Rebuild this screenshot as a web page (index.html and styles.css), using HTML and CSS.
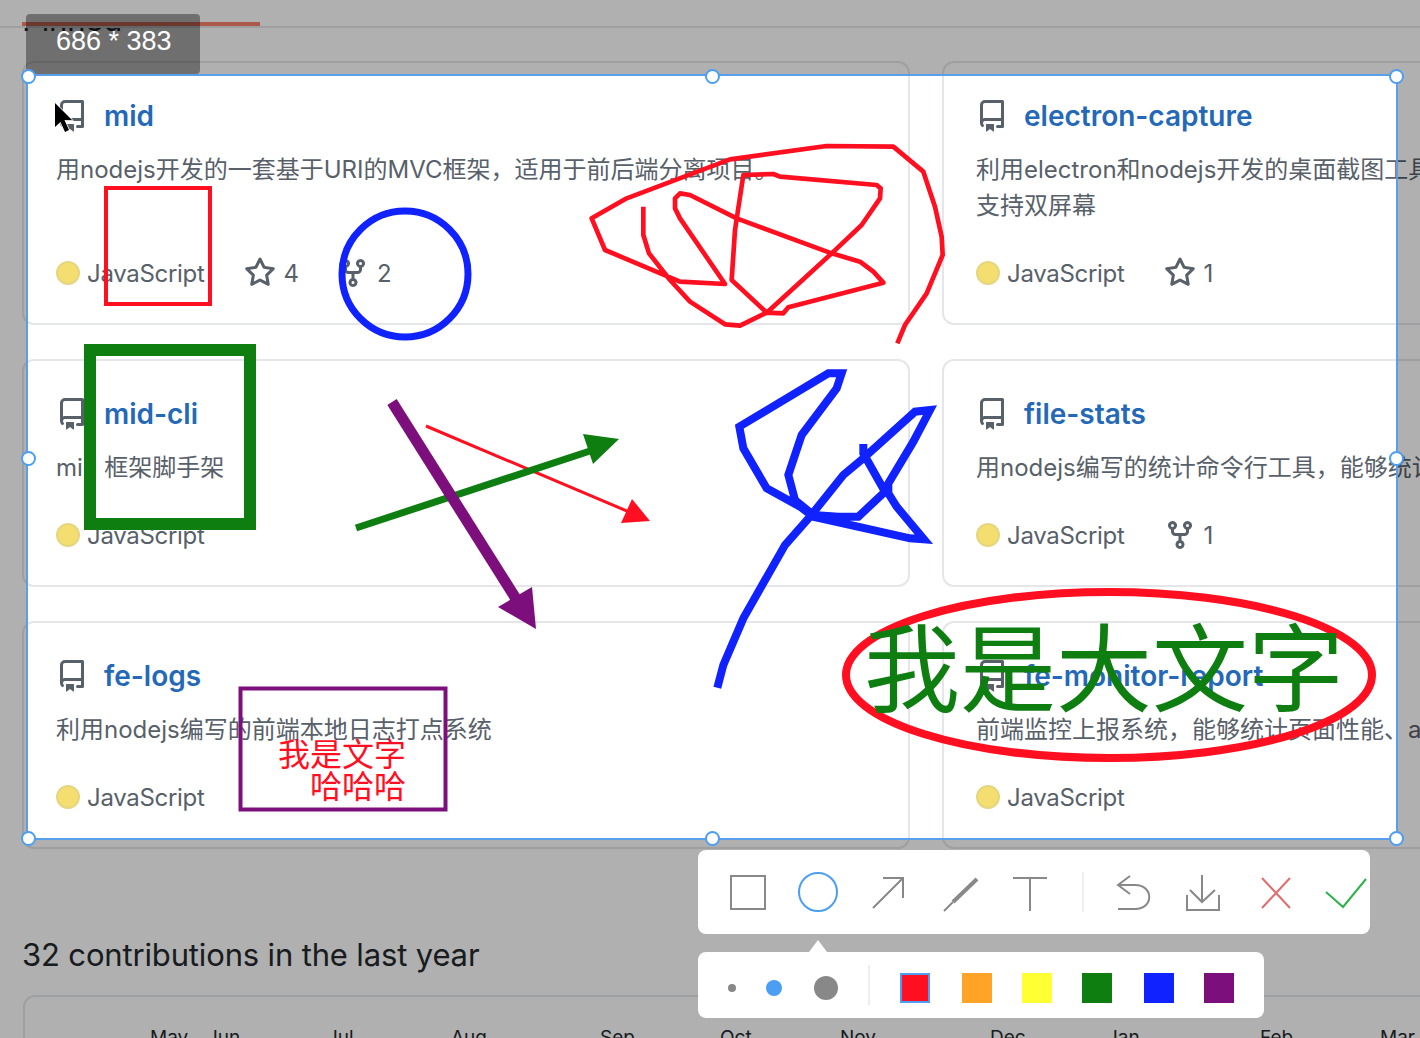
FILE: index.html
```html
<!DOCTYPE html>
<html lang="zh">
<head>
<meta charset="utf-8">
<title>Screenshot capture</title>
<link rel="stylesheet" href="styles.css">
</head>
<body>
<svg class="defs" width="0" height="0" aria-hidden="true">
  <symbol id="i-repo" viewBox="0 0 16 16"><path fill-rule="evenodd" d="M2 2.5A2.5 2.5 0 014.5 0h8.75a.75.75 0 01.75.75v12.5a.75.75 0 01-.75.75h-2.5a.75.75 0 110-1.5h1.75v-2h-8a1 1 0 00-.714 1.7.75.75 0 01-1.072 1.05A2.496 2.496 0 012 11.5v-9zm10.5-1V9h-8c-.356 0-.694.074-1 .208V2.5a1 1 0 011-1h8zM5 12.25v3.25a.25.25 0 00.4.2l1.45-1.087a.25.25 0 01.3 0L8.6 15.7a.25.25 0 00.4-.2v-3.25a.25.25 0 00-.25-.25h-3.5a.25.25 0 00-.25.25z"/></symbol>
  <symbol id="i-star" viewBox="0 0 16 16"><path fill-rule="evenodd" d="M8 .25a.75.75 0 01.673.418l1.882 3.815 4.21.612a.75.75 0 01.416 1.279l-3.046 2.97.719 4.192a.75.75 0 01-1.088.791L8 12.347l-3.766 1.98a.75.75 0 01-1.088-.79l.72-4.194L.818 6.374a.75.75 0 01.416-1.28l4.21-.611L7.327.668A.75.75 0 018 .25zm0 2.445L6.615 5.5a.75.75 0 01-.564.41l-3.097.45 2.24 2.184a.75.75 0 01.216.664l-.528 3.084 2.769-1.456a.75.75 0 01.698 0l2.77 1.456-.53-3.084a.75.75 0 01.216-.664l2.24-2.183-3.096-.45a.75.75 0 01-.564-.41L8 2.694v.001z"/></symbol>
  <symbol id="i-fork" viewBox="0 0 16 16"><path fill-rule="evenodd" d="M5 3.25a.75.75 0 11-1.5 0 .75.75 0 011.5 0zm0 2.122a2.25 2.25 0 10-1.5 0v.878A2.25 2.25 0 005.75 8.5h1.5v2.128a2.251 2.251 0 101.5 0V8.5h1.5a2.25 2.25 0 002.25-2.25v-.878a2.25 2.25 0 10-1.5 0v.878a.75.75 0 01-.75.75h-4.5A.75.75 0 015 6.25v-.878zm3.75 7.378a.75.75 0 11-1.5 0 .75.75 0 011.5 0zm3-8.75a.75.75 0 100-1.5.75.75 0 000 1.5z"/></symbol>
</svg>

<div class="page">
  <nav class="tabs"><span class="tab-active"></span></nav>
  <h2 class="pinned-title">Pinned</h2>

  <section class="repo-grid">
    <article class="card">
      <header class="card-head"><svg class="icon"><use href="#i-repo"/></svg><a class="repo-name">mid</a></header>
      <p class="desc">用nodejs开发的一套基于URI的MVC框架，适用于前后端分离项目。</p>
      <footer class="meta"><span class="dot"></span><span class="lang">JavaScript</span><span class="stat"><svg class="icon"><use href="#i-star"/></svg>4</span><span class="stat"><svg class="icon"><use href="#i-fork"/></svg>2</span></footer>
    </article>
    <article class="card">
      <header class="card-head"><svg class="icon"><use href="#i-repo"/></svg><a class="repo-name">electron-capture</a></header>
      <p class="desc">利用electron和nodejs开发的桌面截图工具，<br>支持双屏幕</p>
      <footer class="meta"><span class="dot"></span><span class="lang">JavaScript</span><span class="stat"><svg class="icon"><use href="#i-star"/></svg>1</span></footer>
    </article>
    <article class="card">
      <header class="card-head"><svg class="icon"><use href="#i-repo"/></svg><a class="repo-name">mid-cli</a></header>
      <p class="desc">mid 框架脚手架</p>
      <footer class="meta"><span class="dot"></span><span class="lang">JavaScript</span></footer>
    </article>
    <article class="card">
      <header class="card-head"><svg class="icon"><use href="#i-repo"/></svg><a class="repo-name">file-stats</a></header>
      <p class="desc">用nodejs编写的统计命令行工具，能够统计文件的代码行数</p>
      <footer class="meta"><span class="dot"></span><span class="lang">JavaScript</span><span class="stat"><svg class="icon"><use href="#i-fork"/></svg>1</span></footer>
    </article>
    <article class="card">
      <header class="card-head"><svg class="icon"><use href="#i-repo"/></svg><a class="repo-name">fe-logs</a></header>
      <p class="desc">利用nodejs编写的前端本地日志打点系统</p>
      <footer class="meta"><span class="dot"></span><span class="lang">JavaScript</span></footer>
    </article>
    <article class="card">
      <header class="card-head"><svg class="icon"><use href="#i-repo"/></svg><a class="repo-name">fe-monitor-report</a></header>
      <p class="desc">前端监控上报系统，能够统计页面性能、ajax请求和错误</p>
      <footer class="meta"><span class="dot"></span><span class="lang">JavaScript</span></footer>
    </article>
  </section>

  <h2 class="contrib-title">32 contributions in the last year</h2>
  <section class="calendar">
    <div class="months">
      <span style="width:57px">May</span><span style="width:120px">Jun</span><span style="width:124px">Jul</span><span style="width:149px">Aug</span><span style="width:120px">Sep</span><span style="width:120px">Oct</span><span style="width:150px">Nov</span><span style="width:117px">Dec</span><span style="width:153px">Jan</span><span style="width:120px">Feb</span><span>Mar</span>
    </div>
  </section>
</div>

<!-- Capture layer -->
<div class="selection">
  <span class="handle h-tl"></span><span class="handle h-tc"></span><span class="handle h-tr"></span>
  <span class="handle h-ml"></span><span class="handle h-mr"></span>
  <span class="handle h-bl"></span><span class="handle h-bc"></span><span class="handle h-br"></span>
</div>
<div class="size-label">686 * 383</div>

<svg class="drawing" viewBox="0 0 1420 1038">
  <rect class="s-red" x="106" y="188" width="104" height="116" stroke-width="4"/>
  <circle class="s-blue" cx="405" cy="274" r="63" stroke-width="7"/>
  <rect class="s-green" x="90" y="350" width="160" height="174" stroke-width="12"/>
  <rect class="s-purple" x="240.500" y="688.500" width="205" height="121" stroke-width="4"/>
  <ellipse class="s-red" cx="1109" cy="675" rx="263" ry="83" stroke-width="8"/>

  <g transform="translate(580 130) scale(.33333)">
    <path class="s-red s-round" stroke-width="14" d="M190 230L190 315 207 370 270 450 330 515 435 583 480 587 560 548 610 550 625 532 910 458 880 425 840 395 755 370 470 265 330 195 300 190 285 205 285 235 300 265 435 462 300 455 75 360 35 265 140 205 450 88 740 48 940 50 1030 125 1065 230 1085 320 1088 375 1040 490 975 585 952 640"/>
    <path class="s-red s-round" stroke-width="14" d="M560 548L455 450 465 300 490 135 580 132 600 140 890 165 902 175 900 205 845 285 755 370 560 548"/>
  </g>

  <g transform="translate(700 360) scale(.33333)">
    <path class="s-blue s-miter" stroke-width="24" d="M52 983L70 915 130 775 255 555 330 470 430 345 490 295 645 155 690 150 640 245 565 370 565 400 590 440 672 538 630 535 340 470 300 440 200 385 130 265 118 200 385 40 425 40 410 85 305 225 265 345 285 420 340 465 415 470 475 470 555 395 490 280 490 252"/>
  </g>

  <line class="s-red" x1="426" y1="426" x2="634" y2="514" stroke-width="3"/>
  <polygon class="f-red" points="650,521 632,499 621,523"/>
  <line class="s-green" x1="356" y1="528" x2="596" y2="449" stroke-width="7"/>
  <polygon class="f-green" points="619,439 583,434 593,464"/>
  <line class="s-purple" x1="392" y1="402" x2="518" y2="602" stroke-width="11"/>
  <polygon class="f-purple" points="536,629 532,587 498,607"/>

  <text class="big-text" x="864" y="704">我是大文字</text>
  <text class="note-text" x="278" y="766">我是文字</text>
  <text class="note-text" x="310" y="798">哈哈哈</text>

  <polygon class="cursor" points="55,103 55,127 60.500,122 65,132 69,130 64.500,120 72,120"/>
</svg>

<div class="toolbar">
  <svg class="tool" viewBox="0 0 36 36"><rect x="1" y="2" width="34" height="33"/></svg>
  <svg class="tool" viewBox="0 0 36 36"><circle class="tool-active" cx="18" cy="18" r="19"/></svg>
  <svg class="tool" viewBox="0 0 36 36"><path d="M3 34L33 4M13 4H33V24"/></svg>
  <svg class="tool" viewBox="0 0 36 36"><path d="M4 37L13 28"/><path class="tool-thick" d="M13 28L37 5"/></svg>
  <svg class="tool" viewBox="0 0 36 36"><path d="M3 4H37M20 4V37"/></svg>
  <span class="divider"></span>
  <svg class="tool" viewBox="0 0 36 36"><path d="M12 2L0 11 12 20M0 11H17C36 11 36 35 17 35H0" /></svg>
  <svg class="tool" viewBox="0 0 36 36"><path d="M14 1V28M2 16L14 28 27 16M-1 21V36H31V21"/></svg>
  <svg class="tool tool-cancel" viewBox="0 0 36 36"><path d="M4 4L32 34M32 4L4 34"/></svg>
  <svg class="tool tool-ok" viewBox="0 0 36 36"><path d="M-2 18L15 33 38 5"/></svg>
</div>

<span class="caret"></span>

<div class="palette">
  <span class="size size-s"></span>
  <span class="size size-m"></span>
  <span class="size size-l"></span>
  <span class="divider"></span>
  <span class="swatch swatch-red"></span>
  <span class="swatch swatch-orange"></span>
  <span class="swatch swatch-yellow"></span>
  <span class="swatch swatch-green"></span>
  <span class="swatch swatch-blue"></span>
  <span class="swatch swatch-purple"></span>
</div>
</body>
</html>
```
FILE: styles.css
```css
* { box-sizing: border-box; }
html, body {
  margin: 0;
  height: 1038px;
  overflow: hidden;
  background: #fff;
}
body {
  position: relative;
  font-family: Inter, "Noto Sans CJK SC", sans-serif;
  color: #24292e;
}
.defs { position: absolute; }

/* Page underneath */
.page { width: 1420px; height: 1038px; overflow: hidden; }
.tabs {
  position: relative;
  height: 28px;
  margin-bottom: -32px;
  background: #fff;
  border-bottom: 2px solid #e4e6e9;
}
.tab-active {
  position: absolute;
  left: 22px;
  bottom: 0;
  width: 238px;
  height: 4px;
  background: #f9826c;
}
.pinned-title {
  margin: 0 0 17px 22px;
  font-size: 31px;
  letter-spacing: -.15px;
  line-height: 48px;
  font-weight: 400;
}
.repo-grid {
  display: grid;
  grid-template-columns: 888px 888px;
  column-gap: 32px;
  row-gap: 34px;
  margin-left: 22px;
}
.card {
  display: flex;
  flex-direction: column;
  padding: 32px;
  border: 2px solid #e4e6e9;
  border-radius: 12px;
  background: #fff;
}
.card-head { display: flex; align-items: center; gap: 16px; height: 42px; }
.icon { width: 32px; height: 32px; fill: #586069; flex: none; }
.repo-name {
  font-size: 28px;
  font-weight: 600;
  line-height: 42px;
  color: #2468b8;
}
.desc {
  margin: 15px 0 31px;
  font-size: 24px;
  line-height: 36px;
  color: #586069;
  white-space: nowrap;
}
.meta {
  display: flex;
  align-items: center;
  height: 36px;
  margin-top: auto;
  font-size: 24px;
  color: #586069;
}
.dot {
  width: 24px;
  height: 24px;
  border-radius: 50%;
  background: #f4de70;
  border: 2px solid #e5d680;
  margin-right: 7px;
}
.lang { margin-right: 39px; letter-spacing: -.3px; }
.stat { display: flex; align-items: center; gap: 8px; margin-right: 38px; }

.contrib-title {
  margin: 82px 0 16px 22px;
  font-size: 31px;
  letter-spacing: -.15px;
  line-height: 48px;
  font-weight: 400;
}
.calendar {
  margin-left: 23px;
  width: 1500px;
  height: 200px;
  border: 2px solid #e4e6e9;
  border-radius: 12px;
  padding: 26px 0 0 125px;
}
.months { display: flex; font-size: 19px; line-height: 30px; }

/* Capture layer */
.selection {
  position: absolute;
  left: 26px;
  top: 74px;
  width: 1372px;
  height: 766px;
  border: 2px solid #5a9fec;
  box-shadow: 0 0 0 2000px rgba(0, 0, 0, .31);
}
.handle {
  position: absolute;
  width: 15px;
  height: 15px;
  margin: -7.500px 0 0 -7.500px;
  border: 2px solid #4c9ef2;
  border-radius: 50%;
  background: #fff;
  z-index: 3;
}
.h-tl { left: 0; top: 0; }
.h-tc { left: 684px; top: 0; }
.h-tr { left: 1368px; top: 0; }
.h-ml { left: 0; top: 382px; }
.h-mr { left: 1368px; top: 382px; }
.h-bl { left: 0; top: 762px; }
.h-bc { left: 684px; top: 762px; }
.h-br { left: 1368px; top: 762px; }

.size-label {
  position: absolute;
  left: 26px;
  top: 14px;
  width: 174px;
  height: 60px;
  padding-left: 30px;
  border-radius: 4px;
  background: rgba(0, 0, 0, .37);
  color: #fff;
  font-family: "Liberation Sans", sans-serif;
  font-size: 27px;
  line-height: 54px;
}

.drawing {
  position: absolute;
  left: 0;
  top: 0;
  width: 1420px;
  height: 1038px;
  pointer-events: none;
}
.drawing rect, .drawing circle, .drawing ellipse, .drawing line, .drawing path { fill: none; }
.s-red { stroke: #ff0f1f; }
.s-blue { stroke: #0f22ff; }
.s-green { stroke: #0e7e11; }
.s-purple { stroke: #7d0f7d; }
.s-round { stroke-linejoin: round; stroke-linecap: butt; }
.s-miter { stroke-linejoin: miter; stroke-miterlimit: 10; stroke-linecap: butt; }
.f-red { fill: #ff0f1f; }
.f-green { fill: #0e7e11; }
.f-purple { fill: #7d0f7d; }
.big-text { fill: #0e7e11; font-size: 96px; font-family: "Noto Sans CJK SC", sans-serif; }
.note-text { fill: #ff0f1f; font-size: 32px; font-family: "Noto Sans CJK SC", sans-serif; }
.cursor { fill: #000; stroke: #fff; stroke-width: 1.500; paint-order: stroke; }

.toolbar {
  position: absolute;
  left: 698px;
  top: 850px;
  width: 672px;
  height: 84px;
  padding-left: 32px;
  display: flex;
  align-items: center;
  gap: 34px;
  background: #fff;
  border-radius: 8px;
}
.tool {
  width: 36px;
  height: 36px;
  flex: none;
  overflow: visible;
  fill: none;
  stroke: #888;
  stroke-width: 2;
}
.tool-active { stroke: #4c9ef2; }
.tool-thick { stroke-width: 4; }
.tool-cancel { stroke: #e06c6c; }
.tool-ok { stroke: #2cb34a; }
.divider {
  width: 2px;
  height: 40px;
  flex: none;
  background: #eee;
}
.toolbar .divider { margin-left: 2px; }

.caret {
  position: absolute;
  left: 809px;
  top: 940px;
  border-left: 9px solid transparent;
  border-right: 9px solid transparent;
  border-bottom: 12px solid #fff;
}

.palette {
  position: absolute;
  left: 698px;
  top: 952px;
  width: 566px;
  height: 66px;
  padding: 5px 0 0 30px;
  display: flex;
  align-items: center;
  gap: 30px;
  background: #fff;
  border-radius: 8px;
}
.size { border-radius: 50%; flex: none; background: #888; }
.size-s { width: 8px; height: 8px; }
.size-m { width: 16px; height: 16px; background: #4c9ef2; }
.size-l { width: 24px; height: 24px; margin-left: 2px; }
.palette .divider { margin-top: -5px; }
.swatch { width: 30px; height: 30px; flex: none; }
.swatch-red { background: #ff0f1f; border: 2px solid #4c9ef2; }
.swatch-orange { background: #ffa427; margin-left: 2px; }
.swatch-yellow { background: #ffff33; }
.swatch-green { background: #0e7e11; }
.swatch-blue { background: #0f22ff; margin-left: 2px; }
.swatch-purple { background: #7d0f7d; }
```
